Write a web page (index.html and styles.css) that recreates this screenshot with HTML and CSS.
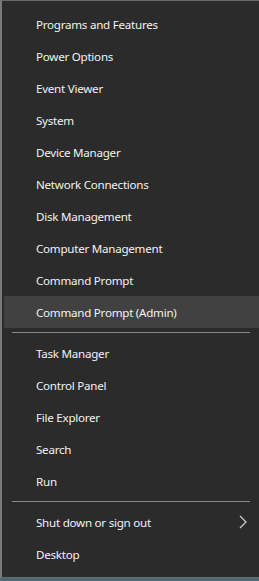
FILE: index.html
```html
<!DOCTYPE html>
<html>
<head>
<meta charset="utf-8">
<link rel="stylesheet" href="styles.css">
</head>
<body>
<div class="menu">
  <div class="group">
    <div class="item">Programs and Features</div>
    <div class="item">Power Options</div>
    <div class="item">Event Viewer</div>
    <div class="item">System</div>
    <div class="item">Device Manager</div>
    <div class="item">Network Connections</div>
    <div class="item">Disk Management</div>
    <div class="item">Computer Management</div>
    <div class="item">Command Prompt</div>
    <div class="item active">Command Prompt (Admin)</div>
  </div>
  <div class="sep"></div>
  <div class="group">
    <div class="item">Task Manager</div>
    <div class="item">Control Panel</div>
    <div class="item">File Explorer</div>
    <div class="item">Search</div>
    <div class="item">Run</div>
  </div>
  <div class="sep"></div>
  <div class="group">
    <div class="item sub">Shut down or sign out
      <svg class="chev" width="8" height="14" viewBox="0 0 8 14"><path d="M1 1 L7 7 L1 13" fill="none" stroke="#d0d0d0" stroke-width="1.2"/></svg>
    </div>
    <div class="item">Desktop</div>
  </div>
</div>
</body>
</html>
```

FILE: styles.css
```css
html, body {
  margin: 0;
  padding: 0;
}
body {
  background: #4d6878;
  width: 259px;
  height: 581px;
  overflow: hidden;
}
.menu {
  box-sizing: border-box;
  width: 259px;
  height: 578px;
  background: #2b2b2b;
  border-top: 1px solid #6a6a6a;
  border-left: 2px solid #7a7a7a;
  border-bottom: 1px solid #6a6a6a;
  padding: 7px 0 7px 2px;
  display: flex;
  flex-direction: column;
  font-family: "Noto Sans", "Open Sans", sans-serif;
  font-size: 11.6px;
  letter-spacing: -0.25px;
  color: #f2f2f2;
}
.item {
  height: 32px;
  display: flex;
  align-items: center;
  padding-left: 32px;
  padding-right: 12px;
}
.item.active {
  background: #414141;
}
.item.sub {
  justify-content: space-between;
}
.chev {
  display: block;
}
.sep {
  height: 1px;
  background: #8a8a8a;
  margin: 4px 9px 4px 8px;
}
```
